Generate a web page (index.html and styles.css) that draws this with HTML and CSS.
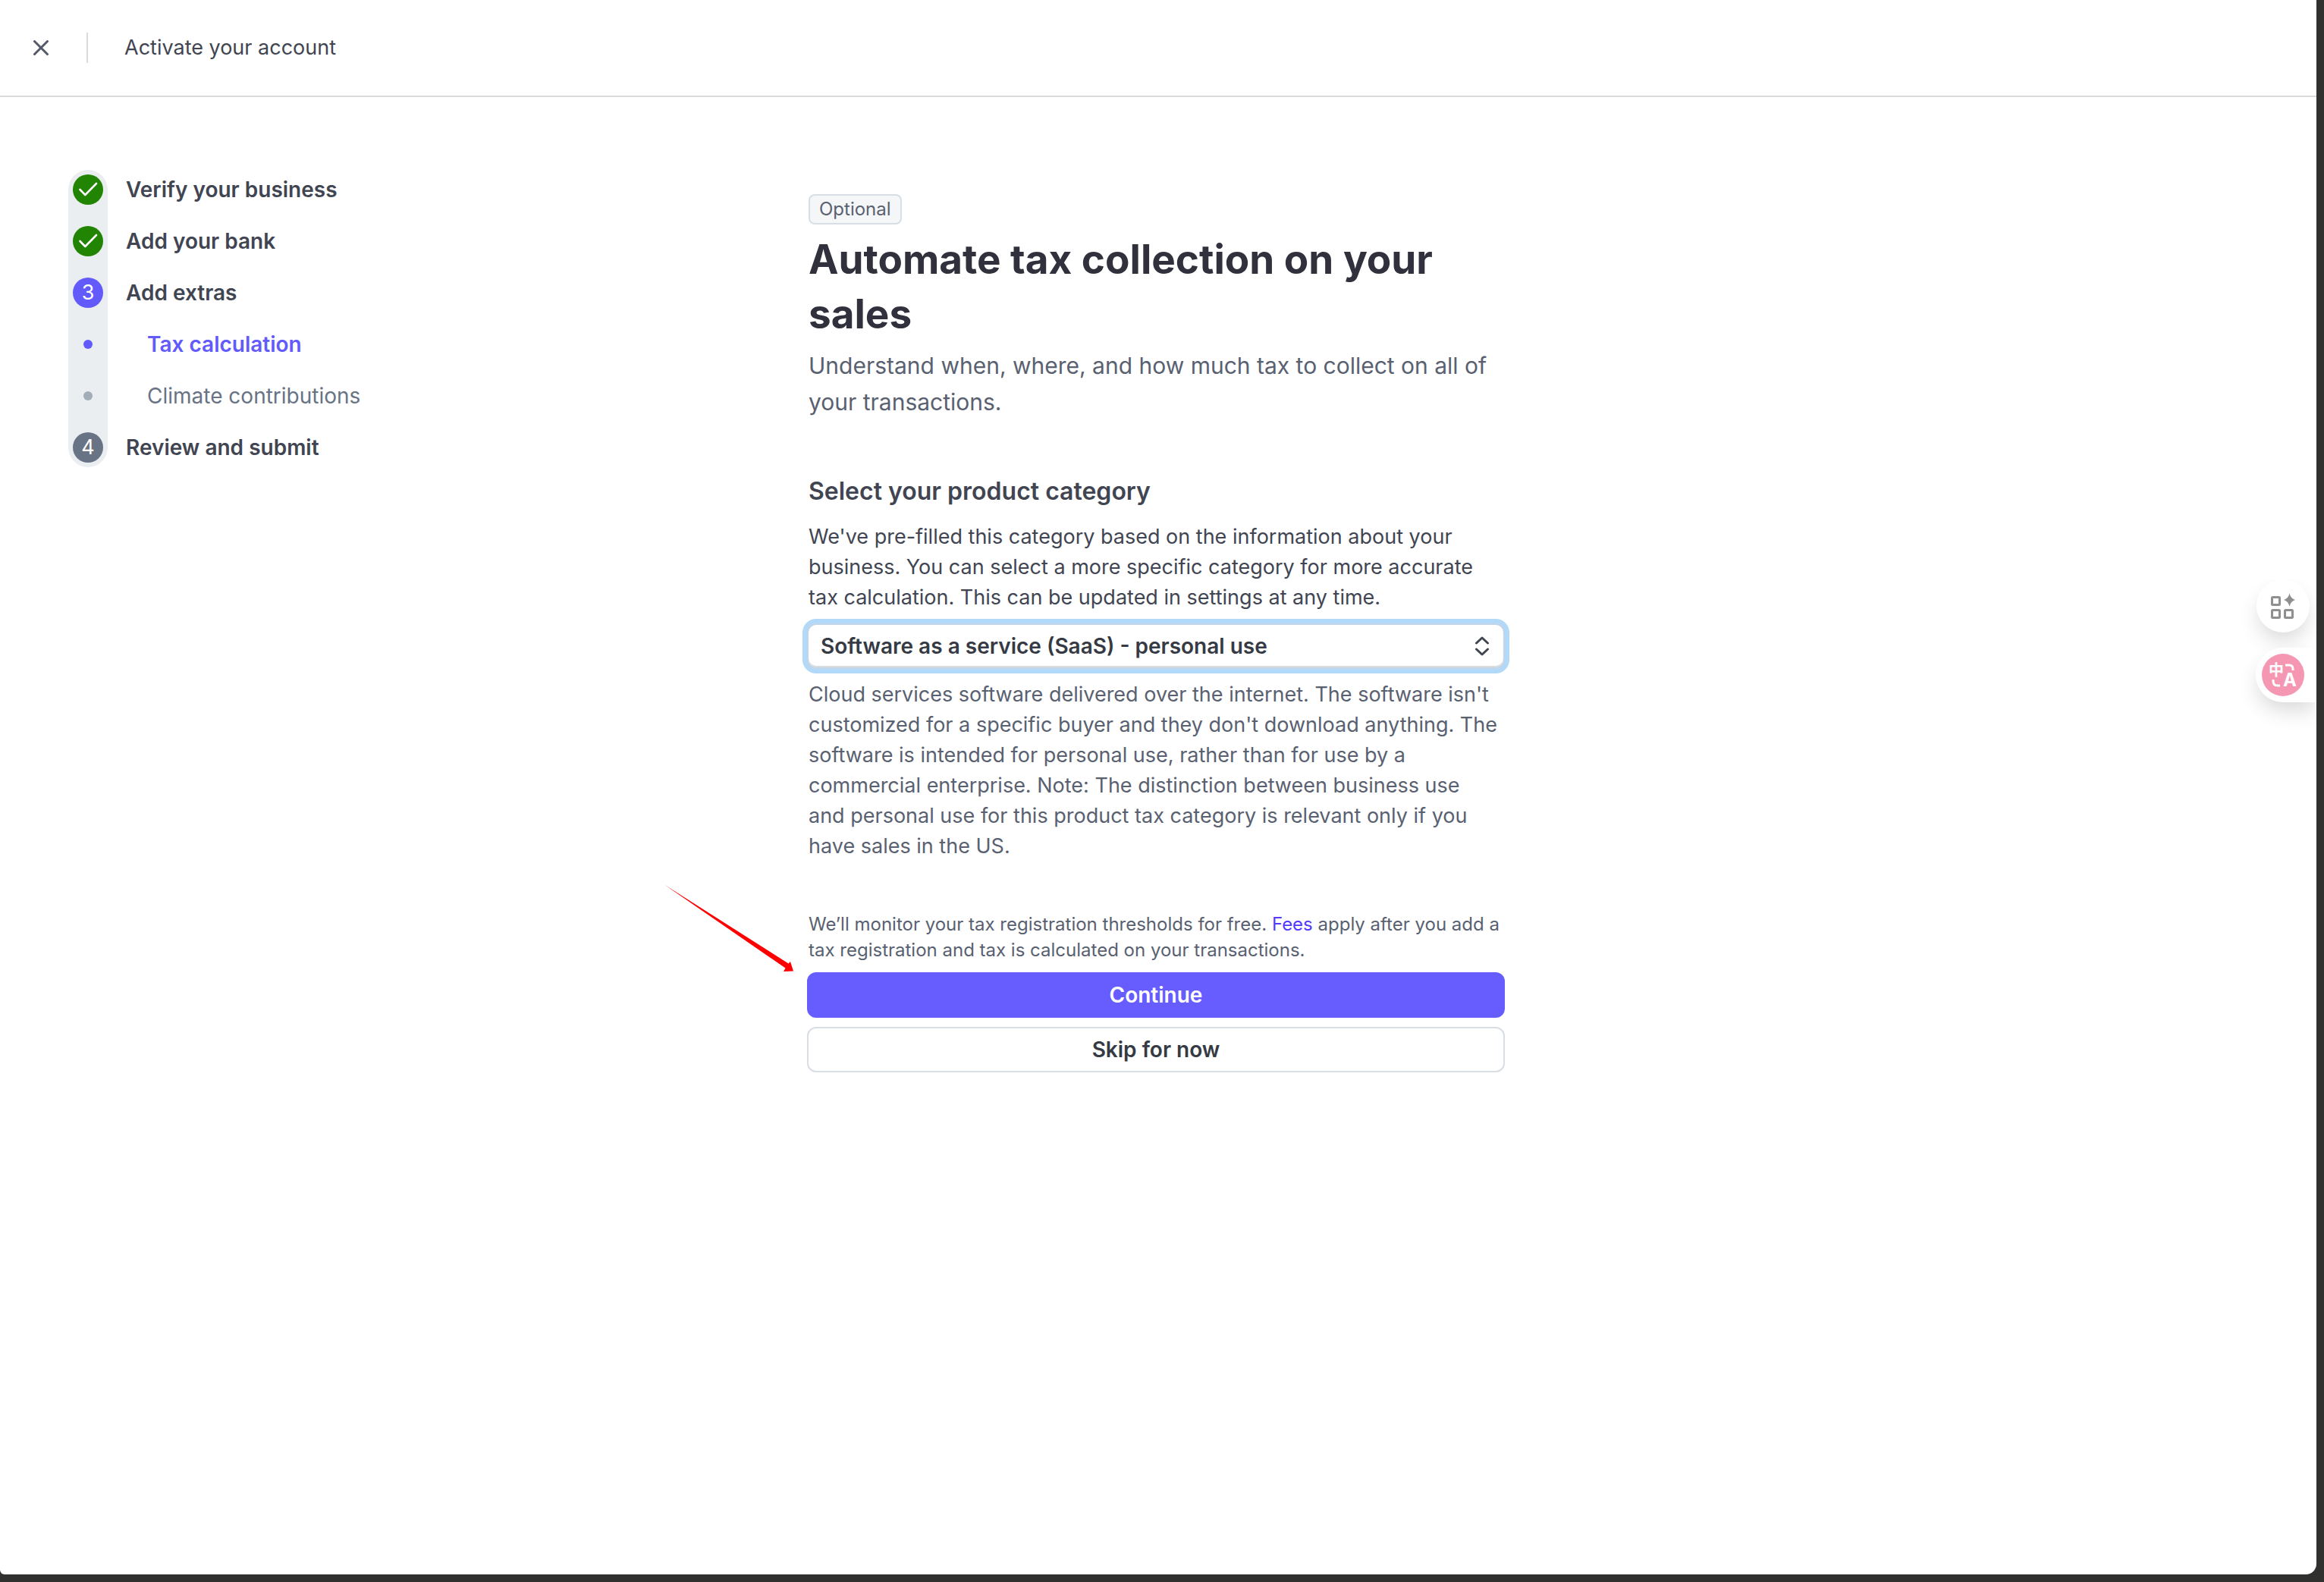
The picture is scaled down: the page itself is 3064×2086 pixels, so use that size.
FILE: index.html
```html
<!DOCTYPE html>
<html lang="en">
<head>
<meta charset="utf-8">
<meta name="viewport" content="width=device-width, initial-scale=1">
<title>Activate your account</title>
<link rel="stylesheet" href="styles.css">
</head>
<body>
<div class="window">
  <header class="topbar">
    <button class="close" type="button" aria-label="Close">
      <svg width="20" height="20" viewBox="0 0 20 20" fill="none" stroke="currentColor" stroke-width="3" stroke-linecap="round"><path d="M1.5 1.5l17 17M18.500 1.500l-17 17"/></svg>
    </button>
    <span class="topbar-title">Activate your account</span>
  </header>

  <div class="layout">
    <nav class="steps" aria-label="Progress">
      <ol class="step-list">
        <li class="step">
          <span class="marker done"><svg width="40" height="40" viewBox="0 0 40 40" fill="none" stroke="currentColor" stroke-width="2.600" stroke-linecap="round" stroke-linejoin="round"><path d="M9.500 20l6.800 7L31 12"/></svg></span>
          <span class="step-label">Verify your business</span>
        </li>
        <li class="step">
          <span class="marker done"><svg width="40" height="40" viewBox="0 0 40 40" fill="none" stroke="currentColor" stroke-width="2.600" stroke-linecap="round" stroke-linejoin="round"><path d="M9.500 20l6.800 7L31 12"/></svg></span>
          <span class="step-label">Add your bank</span>
        </li>
        <li class="step">
          <span class="marker current">3</span>
          <span class="step-label">Add extras</span>
        </li>
        <li class="step">
          <span class="marker"><span class="dot dot-current"></span></span>
          <span class="step-label sub active">Tax calculation</span>
        </li>
        <li class="step">
          <span class="marker"><span class="dot"></span></span>
          <span class="step-label sub">Climate contributions</span>
        </li>
        <li class="step">
          <span class="marker upcoming">4</span>
          <span class="step-label">Review and submit</span>
        </li>
      </ol>
    </nav>

    <main class="content">
      <div class="copy">
        <span class="badge">Optional</span>
        <h1 class="title">Automate tax collection on your sales</h1>
        <p class="lead">Understand when, where, and how much tax to collect on all of your transactions.</p>
        <h2 class="subtitle"><label for="category">Select your product category</label></h2>
        <p class="text">We've pre-filled this category based on the information about your business. You can select a more specific category for more accurate tax calculation. This can be updated in settings at any time.</p>
      </div>
      <div class="select-wrap">
        <select class="select" id="category">
          <option>Software as a service (SaaS) - personal use</option>
        </select>
        <svg class="select-icon" width="20" height="26" viewBox="0 0 20 26" fill="none" stroke="currentColor" stroke-width="3" stroke-linecap="round" stroke-linejoin="round"><path d="M2.500 9L10 2l7.500 7M2.500 17l7.500 7 7.500-7"/></svg>
      </div>
      <div class="copy">
        <p class="text muted">Cloud services software delivered over the internet. The software isn't customized for a specific buyer and they don't download anything. The software is intended for personal use, rather than for use by a commercial enterprise. Note: The distinction between business use and&nbsp;personal use for this product tax category is relevant only if you have sales in the US.</p>
        <p class="fine">We’ll monitor your tax registration thresholds for free. <a class="link" href="#fees">Fees</a> apply after you add a tax registration and tax is calculated on your transactions.</p>
      </div>
      <div class="actions">
        <button class="btn primary" type="button">Continue</button>
        <button class="btn secondary" type="button">Skip for now</button>
        <svg class="pointer" width="172" height="116" viewBox="0 0 172 116" fill="#ff0000" aria-hidden="true"><path d="M0 0.500L163.500 104.500L166 102L170 114.500L157 115L159.500 110.500Z"/></svg>
      </div>
    </main>
  </div>

  <aside class="floaters">
    <button class="floater apps" type="button" aria-label="Apps">
      <svg width="32" height="34" viewBox="0 0 32 34" fill="none" stroke="#8f8f8f" stroke-width="3"><rect x="1.500" y="5.500" width="10" height="10" rx="1"/><rect x="1.500" y="22.500" width="10" height="10" rx="1"/><rect x="18.500" y="22.500" width="10" height="10" rx="1"/><path fill="#8f8f8f" stroke="none" d="M24.500 0.500Q26.200 7.300 32 9Q26.200 10.700 24.500 17.500Q22.800 10.700 17 9Q22.800 7.300 24.500 0.500Z"/></svg>
    </button>
    <button class="floater translate" type="button" aria-label="Translate">
      <svg width="56" height="56" viewBox="0 0 56 56"><circle cx="28" cy="28" r="28" fill="#f597b3"/><g fill="#fff"><text class="glyph-cjk" x="9" y="29">中</text><text class="glyph-latin" x="28" y="43">A</text></g><path d="M31 15h5q5 0 5 5v2M15 34v2q0 6 6 6h3" fill="none" stroke="#fff" stroke-width="3"/></svg>
    </button>
  </aside>
</div>
</body>
</html>
```
FILE: styles.css
```css
* {
  box-sizing: border-box;
}

body {
  margin: 0;
  background: #30312f;
  color: #414552;
  font-family: Inter, "Liberation Sans", "Noto Sans CJK SC", sans-serif;
  font-size: 27px;
  line-height: 40px;
}

h1, h2, p, ol {
  margin: 0;
  padding: 0;
}

button, select {
  margin: 0;
  font: inherit;
  cursor: pointer;
}

.window {
  position: relative;
  min-height: calc(100vh - 10px);
  margin: 0 10px 10px 0;
  background: #fff;
  border-radius: 0 0 14px 6px;
}

.topbar {
  display: flex;
  align-items: center;
  height: 128px;
  padding: 0 44px;
  border-bottom: 2px solid #d8dadc;
}

.close {
  display: flex;
  padding: 0;
  border: 0;
  background: none;
  color: #545969;
}

.topbar-title {
  margin-left: 50px;
  padding-left: 48px;
  border-left: 2px solid #d8dadc;
}

.layout {
  display: grid;
  grid-template-columns: 1fr minmax(0, 920px) 1fr;
  padding: 96px 96px 96px 90px;
}

.step-list {
  display: flex;
  flex-direction: column;
  gap: 28px;
  width: 52px;
  padding: 6px;
  list-style: none;
  background: #ebeef1;
  border-radius: 26px;
}

.step {
  display: flex;
  align-items: center;
  gap: 30px;
}

.marker {
  display: flex;
  flex: none;
  align-items: center;
  justify-content: center;
  width: 40px;
  height: 40px;
  border-radius: 50%;
  color: #fff;
}

.done {
  background: #228403;
}

.current {
  background: #625afa;
}

.upcoming {
  background: #687385;
}

.dot {
  width: 12px;
  height: 12px;
  border-radius: 50%;
  background: #a3acb9;
}

.dot-current {
  background: #625afa;
}

.step-label {
  font-size: 28px;
  font-weight: 600;
  white-space: nowrap;
}

.sub {
  padding-left: 28px;
  color: #687385;
  font-weight: 400;
}

.active {
  color: #625afa;
  font-weight: 600;
}

.content {
  padding-top: 32px;
}

.copy {
  padding: 0 2px;
}

.badge {
  display: block;
  width: fit-content;
  padding: 0 12px;
  border: 2px solid #d8dee4;
  border-radius: 8px;
  background: #f5f6f8;
  color: #596171;
  font-size: 24px;
  line-height: 36px;
}

.title {
  margin-top: 10px;
  color: #30313d;
  font-size: 53px;
  font-weight: 700;
  line-height: 72px;
}

.lead {
  margin-top: 8px;
  color: #596171;
  font-size: 30px;
  line-height: 48px;
}

.subtitle {
  margin-top: 70px;
  font-size: 32px;
  font-weight: 600;
  line-height: 48px;
}

.text {
  margin-top: 16px;
}

.muted {
  margin-top: 14px;
  color: #596171;
}

.select-wrap {
  position: relative;
  margin-top: 14px;
}

.select {
  display: block;
  width: 100%;
  height: 60px;
  padding: 0 60px 0 16px;
  border: 2px solid #c3d5e8;
  border-radius: 12px;
  appearance: none;
  outline: none;
  background: #fff;
  box-shadow: 0 0 0 6px #b3d9f8, inset 0 -2px 1px #d8dadc;
  color: #353a44;
  font-size: 28px;
  font-weight: 600;
}

.select-icon {
  position: absolute;
  top: 17px;
  right: 20px;
  color: #414552;
  pointer-events: none;
}

.fine {
  margin-top: 66px;
  color: #596171;
  font-size: 24px;
  line-height: 34px;
}

.link {
  color: #533afd;
  text-decoration: none;
}

.actions {
  position: relative;
  display: flex;
  flex-direction: column;
  gap: 12px;
  margin-top: 12px;
}

.btn {
  height: 60px;
  padding: 0 16px;
  border: 2px solid #d8dee4;
  border-radius: 12px;
  background: #fff;
  color: #353a44;
  font-size: 28px;
  font-weight: 600;
}

.primary {
  border-color: #675dff;
  background: #675dff;
  color: #fff;
}

.pointer {
  position: absolute;
  top: -116px;
  right: calc(100% + 16px);
}

.floaters {
  position: absolute;
  top: 764px;
  right: 0;
  display: flex;
  flex-direction: column;
  align-items: flex-end;
  gap: 20px;
  overflow: hidden;
  padding: 0 0 48px 48px;
}

.floater {
  display: flex;
  align-items: center;
  border: 0;
  background: #fff;
  box-shadow: 0 14px 28px -4px rgba(0, 0, 0, 0.16);
}

.apps {
  justify-content: center;
  width: 70px;
  height: 70px;
  margin-right: 9px;
  padding: 0;
  border-radius: 50%;
}

.translate {
  width: 80px;
  height: 72px;
  padding: 0 8px;
  border-radius: 36px 0 0 36px;
}

.glyph-cjk {
  font: 700 20px "Noto Sans CJK SC", sans-serif;
}

.glyph-latin {
  font: 700 24px Inter, sans-serif;
}
```
